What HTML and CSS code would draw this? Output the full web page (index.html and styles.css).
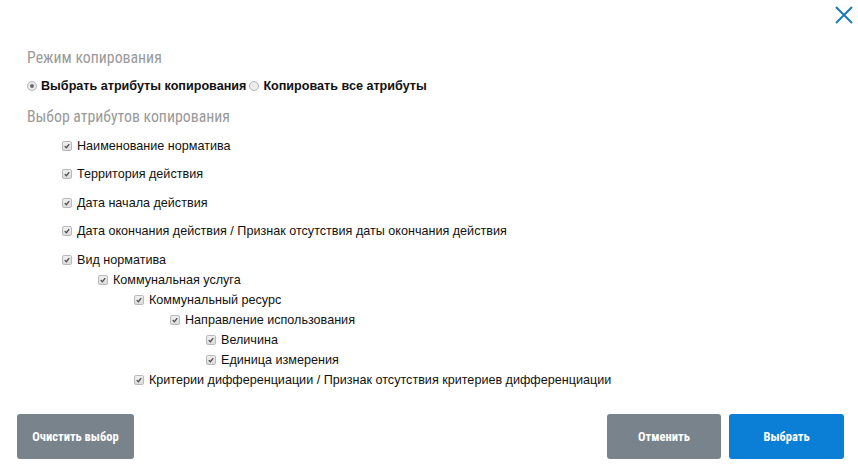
FILE: index.html
```html
<!DOCTYPE html>
<html lang="ru">
<head>
<meta charset="utf-8">
<title>Режим копирования</title>
<link rel="stylesheet" href="styles.css">
</head>
<body>
<div class="dialog">
  <div class="header">
    <button class="close" aria-label="Закрыть">
      <svg width="18" height="18" viewBox="0 0 18 18"><path d="M1 1L17 17M17 1L1 17" stroke="#1b78ba" stroke-width="2" fill="none"/></svg>
    </button>
  </div>
  <div class="content">
    <div class="title t1">Режим копирования</div>
    <div class="modes">
      <label class="radio"><span class="rb on"></span>Выбрать атрибуты копирования</label>
      <label class="radio"><span class="rb"></span>Копировать все атрибуты</label>
    </div>
    <div class="title t2">Выбор атрибутов копирования</div>
    <ul class="tree top">
      <li><label class="item"><span class="cb"><svg viewBox="0 0 10 10"><path d="M2.2 5.2L4.2 7.2L7.8 2.6" stroke="#4d4d4d" stroke-width="1.6" fill="none"/></svg></span>Наименование норматива</label></li>
      <li><label class="item"><span class="cb"><svg viewBox="0 0 10 10"><path d="M2.2 5.2L4.2 7.2L7.8 2.6" stroke="#4d4d4d" stroke-width="1.6" fill="none"/></svg></span>Территория действия</label></li>
      <li><label class="item"><span class="cb"><svg viewBox="0 0 10 10"><path d="M2.2 5.2L4.2 7.2L7.8 2.6" stroke="#4d4d4d" stroke-width="1.6" fill="none"/></svg></span>Дата начала действия</label></li>
      <li><label class="item"><span class="cb"><svg viewBox="0 0 10 10"><path d="M2.2 5.2L4.2 7.2L7.8 2.6" stroke="#4d4d4d" stroke-width="1.6" fill="none"/></svg></span>Дата окончания действия / Признак отсутствия даты окончания действия</label></li>
      <li><label class="item"><span class="cb"><svg viewBox="0 0 10 10"><path d="M2.2 5.2L4.2 7.2L7.8 2.6" stroke="#4d4d4d" stroke-width="1.6" fill="none"/></svg></span>Вид норматива</label>
        <ul class="tree">
          <li><label class="item"><span class="cb"><svg viewBox="0 0 10 10"><path d="M2.2 5.2L4.2 7.2L7.8 2.6" stroke="#4d4d4d" stroke-width="1.6" fill="none"/></svg></span>Коммунальная услуга</label>
            <ul class="tree">
              <li><label class="item"><span class="cb"><svg viewBox="0 0 10 10"><path d="M2.2 5.2L4.2 7.2L7.8 2.6" stroke="#4d4d4d" stroke-width="1.6" fill="none"/></svg></span>Коммунальный ресурс</label>
                <ul class="tree">
                  <li><label class="item"><span class="cb"><svg viewBox="0 0 10 10"><path d="M2.2 5.2L4.2 7.2L7.8 2.6" stroke="#4d4d4d" stroke-width="1.6" fill="none"/></svg></span>Направление использования</label>
                    <ul class="tree">
                      <li><label class="item"><span class="cb"><svg viewBox="0 0 10 10"><path d="M2.2 5.2L4.2 7.2L7.8 2.6" stroke="#4d4d4d" stroke-width="1.6" fill="none"/></svg></span>Величина</label></li>
                      <li><label class="item"><span class="cb"><svg viewBox="0 0 10 10"><path d="M2.2 5.2L4.2 7.2L7.8 2.6" stroke="#4d4d4d" stroke-width="1.6" fill="none"/></svg></span>Единица измерения</label></li>
                    </ul>
                  </li>
                </ul>
              </li>
              <li><label class="item"><span class="cb"><svg viewBox="0 0 10 10"><path d="M2.2 5.2L4.2 7.2L7.8 2.6" stroke="#4d4d4d" stroke-width="1.6" fill="none"/></svg></span>Критерии дифференциации / Признак отсутствия критериев дифференциации</label></li>
            </ul>
          </li>
        </ul>
      </li>
    </ul>
  </div>
  <div class="footer">
    <button class="btn gray">Очистить выбор</button>
    <div class="spacer"></div>
    <button class="btn gray">Отменить</button>
    <button class="btn blue">Выбрать</button>
  </div>
</div>
</body>
</html>
```

FILE: styles.css
```css
html, body {
  margin: 0;
  padding: 0;
  background: #fff;
}
body {
  font-family: "Liberation Sans", Arial, sans-serif;
  font-size: 12.6px;
  color: #111;
}
.dialog {
  height: 473px;
  display: flex;
  flex-direction: column;
  box-sizing: border-box;
}
.header {
  display: flex;
  justify-content: flex-end;
  height: 30px;
  padding: 6px 5px 0 0;
  box-sizing: border-box;
}
.close {
  border: 0;
  background: none;
  padding: 0;
  width: 18px;
  height: 18px;
  cursor: pointer;
}
.close svg { display: block; }
.content {
  padding: 0 0 0 27px;
}
.title {
  font-family: "Liberation Sans Narrow", "Roboto Condensed", Roboto, sans-serif;
  font-size: 15.8px;
  line-height: 20px;
  height: 20px;
  color: #9a9a9a;
}
.t1 { margin-top: 18px; }
.t2 { margin-top: 11px; }
.modes {
  margin-top: 8px;
  height: 20px;
  display: flex;
  align-items: center;
  gap: 3px;
  font-weight: bold;
}
.radio {
  display: flex;
  align-items: center;
}
.rb {
  width: 10px;
  height: 10px;
  border-radius: 50%;
  border: 1px solid #b5b5b5;
  background: #ececec;
  box-sizing: border-box;
  margin-right: 4px;
  position: relative;
}
.rb.on::after {
  content: "";
  position: absolute;
  left: 2px;
  top: 2px;
  width: 4px;
  height: 4px;
  border-radius: 50%;
  background: #6d6d6d;
}
.tree {
  list-style: none;
  margin: 0;
  padding: 0 0 0 36px;
}
.tree.top {
  padding-left: 35px;
}
.tree.top > li {
  padding-top: 8.5px;
}
.item {
  display: flex;
  align-items: center;
  height: 20px;
}
.cb {
  width: 10px;
  height: 10px;
  border: 1px solid #b9b9b9;
  border-radius: 2px;
  background: linear-gradient(#f0f0f0, #dcdcdc);
  box-sizing: border-box;
  margin-right: 5px;
  display: flex;
}
.cb svg {
  width: 8px;
  height: 8px;
}
.footer {
  margin-top: auto;
  display: flex;
  gap: 8px;
  padding: 0 14px 14px 17px;
}
.spacer { flex: 1; }
.btn {
  height: 45px;
  border: 0;
  border-radius: 3px;
  color: #fff;
  font-family: "Liberation Sans Narrow", "Roboto Condensed", Roboto, sans-serif;
  font-size: 12.5px;
  font-weight: bold;
  cursor: pointer;
}
.btn.gray {
  background: #78838c;
  width: 114px;
}
.footer .btn.gray:first-child { width: 117px; }
.btn.blue {
  background: #0b7fd6;
  width: 115px;
}
```
